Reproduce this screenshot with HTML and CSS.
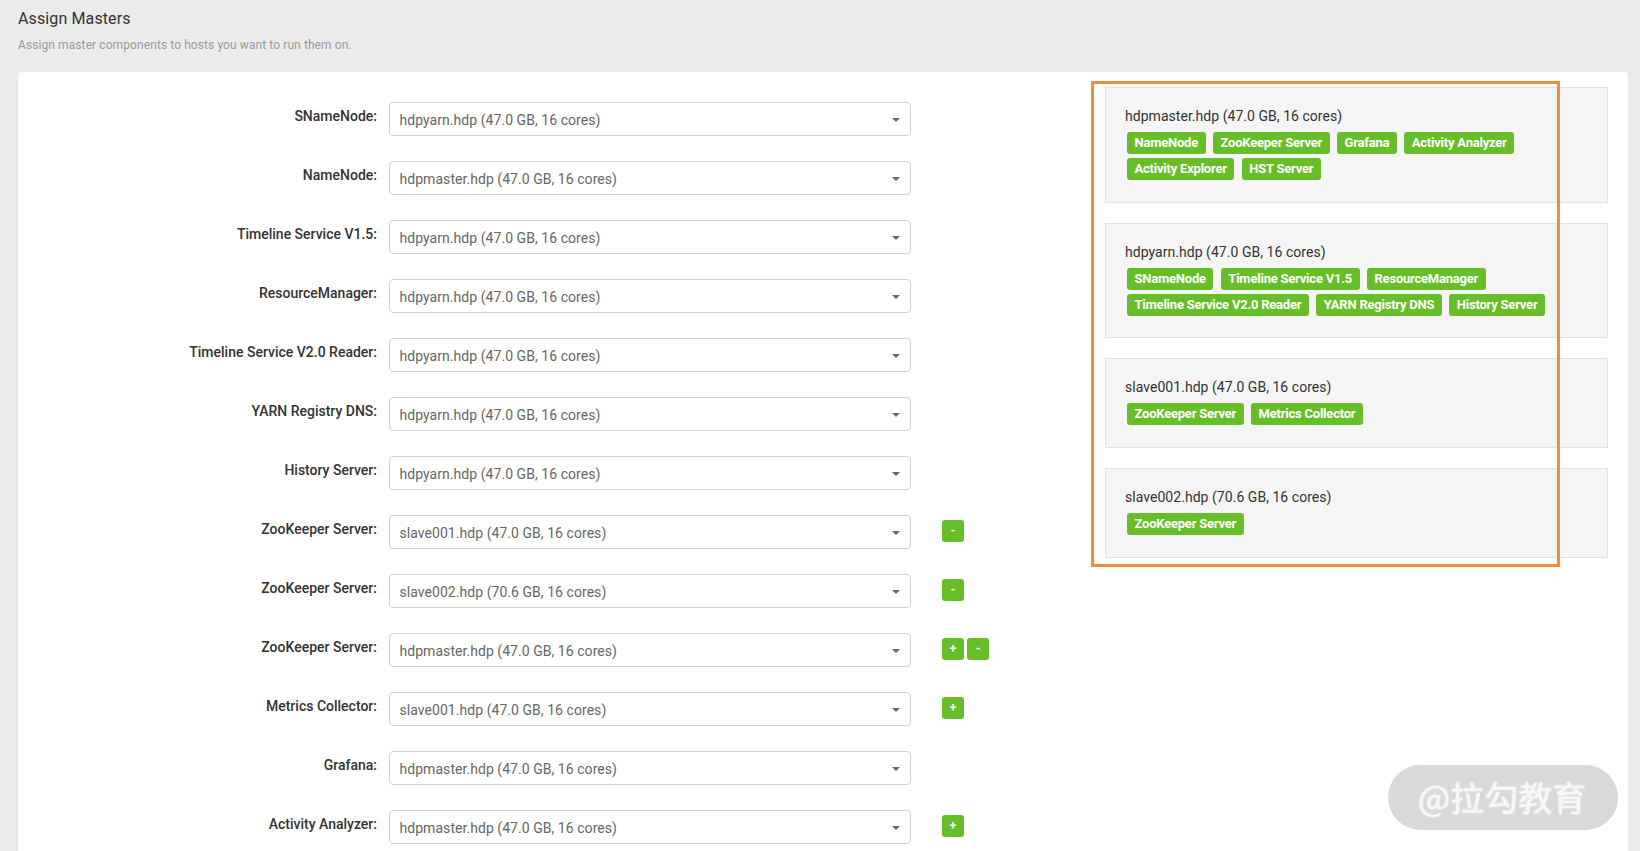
FILE: index.html
```html
<!DOCTYPE html>
<html lang="en">
<head>
    <meta charset="UTF-8">
    <meta name="viewport" content="width=device-width, initial-scale=1.0">
    <title>Assign Masters</title>
    <link rel="stylesheet" href="styles.css">
</head>
<body>
    <header>
        <h1>Assign Masters</h1>
        <p>Assign master components to hosts you want to run them on.</p>
    </header>

    <main class="panel">
        <section class="masters" id="masters"></section>
        <section class="hosts">
            <div id="hosts"></div>
            <div class="highlight"></div>
        </section>
    </main>

    <div class="watermark">@拉勾教育</div>

    <script>
const hosts = {
    hdpmaster: "hdpmaster.hdp (47.0 GB, 16 cores)",
    hdpyarn: "hdpyarn.hdp (47.0 GB, 16 cores)",
    slave001: "slave001.hdp (47.0 GB, 16 cores)",
    slave002: "slave002.hdp (70.6 GB, 16 cores)"
};

const masters = [
    { name: "SNameNode", host: "hdpyarn", buttons: "" },
    { name: "NameNode", host: "hdpmaster", buttons: "" },
    { name: "Timeline Service V1.5", host: "hdpyarn", buttons: "" },
    { name: "ResourceManager", host: "hdpyarn", buttons: "" },
    { name: "Timeline Service V2.0 Reader", host: "hdpyarn", buttons: "" },
    { name: "YARN Registry DNS", host: "hdpyarn", buttons: "" },
    { name: "History Server", host: "hdpyarn", buttons: "" },
    { name: "ZooKeeper Server", host: "slave001", buttons: "-" },
    { name: "ZooKeeper Server", host: "slave002", buttons: "-" },
    { name: "ZooKeeper Server", host: "hdpmaster", buttons: "+-" },
    { name: "Metrics Collector", host: "slave001", buttons: "+" },
    { name: "Grafana", host: "hdpmaster", buttons: "" },
    { name: "Activity Analyzer", host: "hdpmaster", buttons: "+" }
];

const assigned = [
    { host: "hdpmaster", rows: [["NameNode", "ZooKeeper Server", "Grafana", "Activity Analyzer"], ["Activity Explorer", "HST Server"]] },
    { host: "hdpyarn", rows: [["SNameNode", "Timeline Service V1.5", "ResourceManager"], ["Timeline Service V2.0 Reader", "YARN Registry DNS", "History Server"]] },
    { host: "slave001", rows: [["ZooKeeper Server", "Metrics Collector"]] },
    { host: "slave002", rows: [["ZooKeeper Server"]] }
];

document.getElementById("masters").innerHTML = masters.map(m => `
    <div class="form-row">
        <label>${m.name}:</label>
        <div class="select">${hosts[m.host]}<span class="caret"></span></div>
        <div class="buttons">${[...m.buttons].map(b => `<button>${b}</button>`).join('')}</div>
    </div>
`).join('');

document.getElementById("hosts").innerHTML = assigned.map(a => `
    <div class="host">
        <div class="host-name">${hosts[a.host]}</div>
        ${a.rows.map(row => `<div class="tags">${row.map(t => `<span class="tag">${t}</span>`).join('')}</div>`).join('')}
    </div>
`).join('');
    </script>
</body>
</html>
```

FILE: styles.css
```css
* {
    box-sizing: border-box;
}
body {
    font-family: Roboto, sans-serif;
    font-size: 14px;
    line-height: 20px;
    color: #333;
    margin: 0;
    height: 851px;
    overflow: hidden;
    background: #ebebeb;
}
header {
    height: 72px;
    padding: 9px 18px 0;
}
h1 {
    margin: 0;
    font-size: 16px;
    font-weight: 400;
    letter-spacing: 0.12px;
}
header p {
    margin: 6px 0 0;
    font-size: 12px;
    color: #999;
    letter-spacing: 0.09px;
}
.panel {
    display: flex;
    justify-content: space-between;
    height: 800px;
    margin: 0 12px 0 18px;
    padding: 15px 20px 0 0;
    background: white;
    border-radius: 4px;
}
.masters {
    display: flex;
    flex-direction: column;
    gap: 25px;
    padding-top: 15px;
}
.form-row {
    display: grid;
    grid-template-columns: 359px 522px 60px;
    column-gap: 12px;
    height: 34px;
    flex-shrink: 0;
}
label {
    padding-top: 4px;
    font-weight: 500;
    text-align: right;
}
.select {
    display: flex;
    justify-content: space-between;
    align-items: center;
    height: 34px;
    padding: 2px 10px 0 9.5px;
    color: #666;
    letter-spacing: 0.05px;
    border: 1px solid #cfd3d7;
    border-radius: 4px;
}
.caret {
    border-top: 4px solid #666;
    border-left: 4px solid transparent;
    border-right: 4px solid transparent;
}
.buttons {
    display: flex;
    gap: 3px;
    padding: 5px 0 0 19px;
}
button {
    flex-shrink: 0;
    width: 22px;
    height: 22px;
    padding: 0;
    font: bold 12px/20px Roboto, sans-serif;
    color: white;
    background: #68be28;
    border: none;
    border-radius: 3px;
}
.hosts {
    position: relative;
    width: 503px;
}
.host {
    margin-bottom: 20px;
    padding: 18px 19px 21.7px;
    background: #f5f5f5;
    border: 1px solid #e2e2e2;
}
.host-name {
    padding-bottom: 2px;
    letter-spacing: 0.04px;
}
.tags {
    display: flex;
    gap: 7.5px;
    height: 26px;
    padding: 4px 0 0 2px;
}
.tag {
    height: 22px;
    padding: 0 7.5px;
    font-size: 13px;
    font-weight: 700;
    line-height: 21px;
    letter-spacing: -0.22px;
    color: white;
    background: #68be28;
    border-radius: 3px;
    white-space: nowrap;
}
/* frame drawn over the host cards */
.highlight {
    position: absolute;
    top: -6px;
    left: -14px;
    width: 469px;
    height: 486px;
    border: 3px solid #f68b3d;
}
.watermark {
    position: absolute;
    right: 22px;
    bottom: 21px;
    width: 230px;
    height: 65px;
    padding-left: 30px;
    font-family: "Noto Sans CJK SC", sans-serif;
    font-size: 34px;
    font-weight: 400;
    line-height: 64px;
    color: #f7f7f7;
    background: #d9d9d9;
    border-radius: 33px;
    text-shadow: 0 0 2px #fff;
}
```
